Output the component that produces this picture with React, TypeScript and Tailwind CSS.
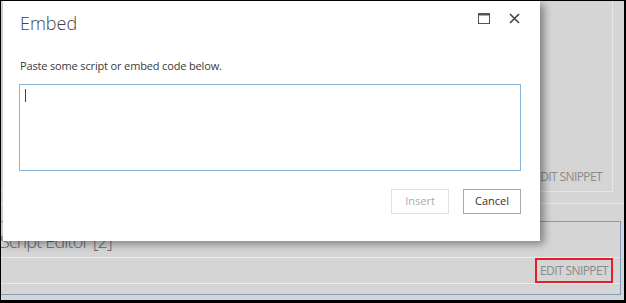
import React from 'react'

const font = "font-['Open_Sans',sans-serif]"

const MaximizeIcon = () => (
  <svg width="12" height="11" viewBox="0 0 12 11" className="block">
    <rect x="0.5" y="0.5" width="11" height="10" fill="none" stroke="#555" strokeWidth="1" />
    <rect x="0" y="0" width="12" height="2.5" fill="#555" />
  </svg>
)

const CloseIcon = () => (
  <svg width="11" height="11" viewBox="0 0 11 11" className="block">
    <path d="M1 1 L10 10 M10 1 L1 10" stroke="#444" strokeWidth="1.6" />
  </svg>
)

const EmbedDialog = () => (
  <div className="absolute left-[2px] top-0 w-[537px] h-[240px] bg-white shadow-[4px_3px_8px_rgba(0,0,0,0.4)] flex flex-col pl-[16px] pr-[19px]">
    <div className="flex items-start justify-between h-[46px]">
      <h1 className="pt-[9px] pl-[1px] text-[18px] font-light text-[#444] leading-[26px]">Embed</h1>
      <div className="flex items-center gap-[19px] pt-[12px] pr-[1px]">
        <MaximizeIcon />
        <CloseIcon />
      </div>
    </div>
    <p className="pl-[1px] pt-[11px] text-[11px] text-[#3a3a3a] leading-[16px] tracking-[-0.15px]">Paste some script or embed code below.</p>
    <div className="mt-[10px] h-[87px] border border-[#86b7d9] pl-[5px] pt-[4px]">
      <span className="block w-px h-[13px] bg-[#444]" />
    </div>
    <div className="flex justify-end gap-[14px] mt-[18px]">
      <button className="w-[58px] h-[25px] border border-[#e2e2e2] text-[11px] text-[#ababab] bg-white">Insert</button>
      <button className="w-[58px] h-[25px] border border-[#a9a9a9] text-[11px] text-[#333] bg-white">Cancel</button>
    </div>
  </div>
)

export default function App() {
  return (
    <div className={`${font} relative w-[626px] h-[303px] overflow-hidden bg-[#d5d5d5] border-black border-t border-l border-r-2 border-b-[3px]`}>
      <div className="h-[203px] border-b border-[#e9e9e9] pr-[11px]">
        <div className="h-[191px] border-r border-b border-[#e6e6e6] flex items-end justify-end pr-[10px] pb-[5px]">
          <span className="text-[12px] text-[#8a8a8a] tracking-[-0.6px]">EDIT SNIPPET</span>
        </div>
      </div>
      <div className="mt-[17px] -ml-px mr-[3px] h-[74px] border-t border-r border-b border-[#7d9fbd] flex flex-col">
        <div className="h-[35px] pt-[6px] text-[18px] font-light text-[#666] leading-[26px] tracking-[-0.8px] whitespace-nowrap">Script Editor [2]</div>
        <div className="h-[27px] border-t border-b border-[#ebebeb] flex justify-end items-stretch pr-[7px]">
          <div className="w-[78px] border-2 border-[#e0202b] flex items-center justify-center">
            <span className="text-[12px] text-[#8a8a8a] tracking-[-0.6px]">EDIT SNIPPET</span>
          </div>
        </div>
      </div>
      <EmbedDialog />
    </div>
  )
}
